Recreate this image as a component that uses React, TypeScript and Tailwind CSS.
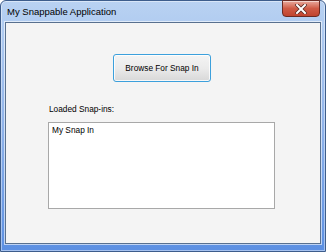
import React from 'react';

const font = { fontFamily: '"Liberation Sans", Arial, sans-serif' };

const CloseButton: React.FC = () => (
    <div className="relative mt-[-1px] w-[38px] h-[17px] rounded-b-[4px] border border-[#6b2a22] bg-gradient-to-b from-[#e8a99d] via-[#cf5a45] to-[#c0442f] flex items-center justify-center shadow-[inset_0_1px_0_rgba(255,255,255,0.5)]">
        <svg width="12" height="10" viewBox="0 0 12 10">
            <path d="M2 1 L10 9 M10 1 L2 9" stroke="#5a2a24" strokeWidth="3.6" strokeLinecap="square" />
            <path d="M2 1 L10 9 M10 1 L2 9" stroke="#ffffff" strokeWidth="2" strokeLinecap="square" />
        </svg>
    </div>
);

export default function App() {
    return (
        <div className="w-[326px] h-[252px] bg-white" style={font}>
            <div className="w-full h-full flex flex-col rounded-t-[6px] border border-[#3d5d8c] bg-gradient-to-b from-[#b9d2f2] via-[#8fb3ea] to-[#5b8fe2] shadow-[inset_0_0_0_1px_rgba(255,255,255,0.45)]">
                {/* Title bar */}
                <div className="h-[20px] flex items-start justify-between pl-[6px] pr-[5px]">
                    <span className="text-[9.5px] leading-none text-black mt-[6px]">My Snappable Application</span>
                    <CloseButton />
                </div>

                {/* Client area */}
                <div className="mx-[4px] mb-[7px] mt-[1px] flex-1 border border-[#58708f] shadow-[0_0_0_1px_rgba(255,255,255,0.6)] bg-[#f4f4f4] flex flex-col">
                    <div className="flex justify-center pt-[31px]">
                        <button className="ml-[-2px] w-[98px] h-[28px] rounded-[3px] border border-[#3ca0dc] bg-gradient-to-b from-[#f4f4f4] via-[#ebebeb] to-[#d8d8d8] shadow-[inset_0_0_0_1px_rgba(255,255,255,0.8)] text-[8.3px] text-black">
                            Browse For Snap In
                        </button>
                    </div>
                    <div className="pl-[43px] pt-[23px] text-[8.3px] leading-none text-black">Loaded Snap-ins:</div>
                    <div className="ml-[42px] mt-[9px] w-[227px] h-[87px] border border-[#a8a8a8] bg-white px-[3px] pt-[2px]">
                        <div className="text-[8.3px] leading-[11px] text-black">My Snap In</div>
                    </div>
                </div>
            </div>
        </div>
    );
}
